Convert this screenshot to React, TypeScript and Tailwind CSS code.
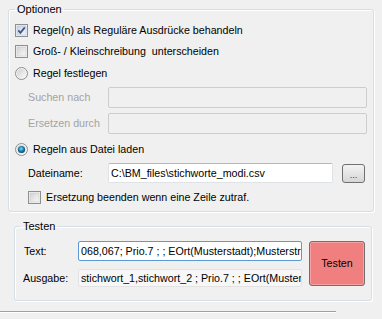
import React from 'react';

// Windows-7-style checkbox
function CheckBox({ checked }: { checked?: boolean }) {
	return (
		<svg width="13" height="13" viewBox="0 0 13 13" className="shrink-0">
			<defs>
				<linearGradient id={checked ? 'cbOn' : 'cbOff'} x1="0" y1="0" x2="1" y2="1">
					<stop offset="0" stopColor={checked ? '#c3d3e6' : '#d2d2d2'} />
					<stop offset="1" stopColor={checked ? '#f4f8fc' : '#f8f8f8'} />
				</linearGradient>
			</defs>
			<rect x="0.5" y="0.5" width="12" height="12" fill="#f4f4f4" stroke="#8e8f8f" />
			<rect x="2" y="2" width="9" height="9" fill={`url(#${checked ? 'cbOn' : 'cbOff'})`} stroke={checked ? '#a7b8cf' : '#c3c3c3'} strokeWidth="0.5" />
			{checked && (
				<path d="M3.3 6.4 L5.4 8.9 L9.8 3.4" fill="none" stroke="#3e5785" strokeWidth="1.7" />
			)}
		</svg>
	);
}

// Windows-7-style radio button
function Radio({ checked }: { checked?: boolean }) {
	return (
		<svg width="13" height="13" viewBox="0 0 13 13" className="shrink-0">
			<defs>
				<linearGradient id="rdBg" x1="0" y1="0" x2="1" y2="1">
					<stop offset="0" stopColor="#cfcfcf" />
					<stop offset="1" stopColor="#fafafa" />
				</linearGradient>
				<radialGradient id="rdDot" cx="0.45" cy="0.4" r="0.6">
					<stop offset="0" stopColor="#8be0f5" />
					<stop offset="0.45" stopColor="#2b8fc4" />
					<stop offset="1" stopColor="#0b3f6a" />
				</radialGradient>
			</defs>
			<circle cx="6.5" cy="6.5" r="6" fill="#f2f2f2" stroke="#8e8f8f" />
			<circle cx="6.5" cy="6.5" r="4.5" fill="url(#rdBg)" />
			{checked && <circle cx="6.5" cy="6.5" r="3.6" fill="url(#rdDot)" />}
		</svg>
	);
}

// Textbox (deaktiviert / normal / fokussiert)
function TextBox({
	width,
	height,
	disabled,
	focused,
	readOnly,
	children,
}: {
	width: string;
	height: string;
	disabled?: boolean;
	focused?: boolean;
	readOnly?: boolean;
	children?: React.ReactNode;
}) {
	const cls = disabled
		? 'bg-[#f0f0f0] border-[#cdcdcd]'
		: focused
		? 'bg-white border-[#5a9bd5]'
		: readOnly
		? 'bg-[#f7f7f7] border-[#e2e2e2]'
		: 'bg-white border-[#dfe3e8] border-t-[#b4b7bd]';
	return (
		<div
			className={`${width} ${height} ${cls} border rounded-[2px] flex items-center px-[2px] overflow-hidden whitespace-nowrap`}
		>
			{children}
		</div>
	);
}

export default function App() {
	return (
		<div className="w-[382px] h-[319px] bg-[#f0f0f0] overflow-hidden text-[10.7px] leading-[13px] text-black font-['Liberation_Sans',Arial,sans-serif]">
			{/* Optionen */}
			<fieldset className="ml-[8px] mt-[3px] w-[365px] border border-[#d5dfe5] rounded-[3px] px-[6px] pt-[3px] pb-0 shadow-[1px_1px_0_#ffffff,inset_1px_1px_0_#ffffff]">
				<legend className="px-[2px] leading-[13px] text-[11px]">Optionen</legend>

				<div className="h-[22px] flex items-center gap-[5px]">
					<CheckBox checked />
					<span>Regel(n) als Reguläre Ausdrücke behandeln</span>
				</div>
				<div className="h-[21px] flex items-center gap-[5px]">
					<CheckBox />
					<span>Groß- / Kleinschreibung &nbsp;unterscheiden</span>
				</div>
				<div className="h-[22px] flex items-center gap-[5px]">
					<Radio />
					<span>Regel festlegen</span>
				</div>
				<div className="h-[26px] flex items-center pl-[13px]">
					<span className="w-[80px] text-[#a3a3a3]">Suchen nach</span>
					<TextBox width="w-[259px]" height="h-[21px]" disabled />
				</div>
				<div className="h-[26px] flex items-center pl-[13px]">
					<span className="w-[80px] text-[#a3a3a3]">Ersetzen durch</span>
					<TextBox width="w-[259px]" height="h-[21px]" disabled />
				</div>
				<div className="h-[26px] flex items-center gap-[5px]">
					<Radio checked />
					<span>Regeln aus Datei laden</span>
				</div>
				<div className="h-[22px] flex items-center pl-[13px]">
					<span className="w-[80px]">Dateiname:</span>
					<TextBox width="w-[225px]" height="h-[20px]">
						C:\BM_files\stichworte_modi.csv
					</TextBox>
					<button className="ml-[9px] w-[23px] h-[19px] border border-[#707070] rounded-[3px] bg-gradient-to-b from-[#f3f3f3] to-[#d6d6d6] text-[9px] leading-[9px] text-[#333] pt-[4px]">
						...
					</button>
				</div>
				<div className="h-[27px] flex items-center gap-[5px] pl-[13px]">
					<CheckBox />
					<span>Ersetzung beenden wenn eine Zeile zutraf.</span>
				</div>
			</fieldset>

			{/* Testen */}
			<fieldset className="ml-[14px] mt-[8px] w-[358px] border border-[#d5dfe5] rounded-[3px] px-[6px] pt-[6px] pb-[11px] shadow-[1px_1px_0_#ffffff,inset_1px_1px_0_#ffffff]">
				<legend className="px-[2px] leading-[13px] text-[11px]">Testen</legend>
				<div className="flex items-start">
					<div className="flex flex-col">
						<div className="h-[24px] flex items-center">
							<span className="w-[57px] pl-[3px]">Text:</span>
							<TextBox width="w-[224px]" height="h-[20px]" focused>
								<span>068,067</span>
								<span className="inline-block w-px h-[13px] bg-black" />
								<span>; Prio.7 ; ; EOrt(Musterstadt);Musterstr</span>
							</TextBox>
						</div>
						<div className="h-[22px] mt-[4px] flex items-center">
							<span className="w-[57px] pl-[2px]">Ausgabe:</span>
							<TextBox width="w-[224px]" height="h-[18px]" readOnly>
								stichwort_1,stichwort_2 ; Prio.7 ; ; EOrt(Muster
							</TextBox>
						</div>
					</div>
					<button className="ml-[7px] mt-[2px] w-[56px] h-[45px] border border-[#707070] rounded-[3px] bg-[#f08080] shadow-[inset_0_0_0_1px_#f6a0a0]">
						Testen
					</button>
				</div>
			</fieldset>

			{/* unterer Rand */}
			<div className="mt-[10px] w-[336px] h-px bg-[#a0a0a0]" />
			<div className="w-[336px] h-px bg-white" />
		</div>
	);
}
